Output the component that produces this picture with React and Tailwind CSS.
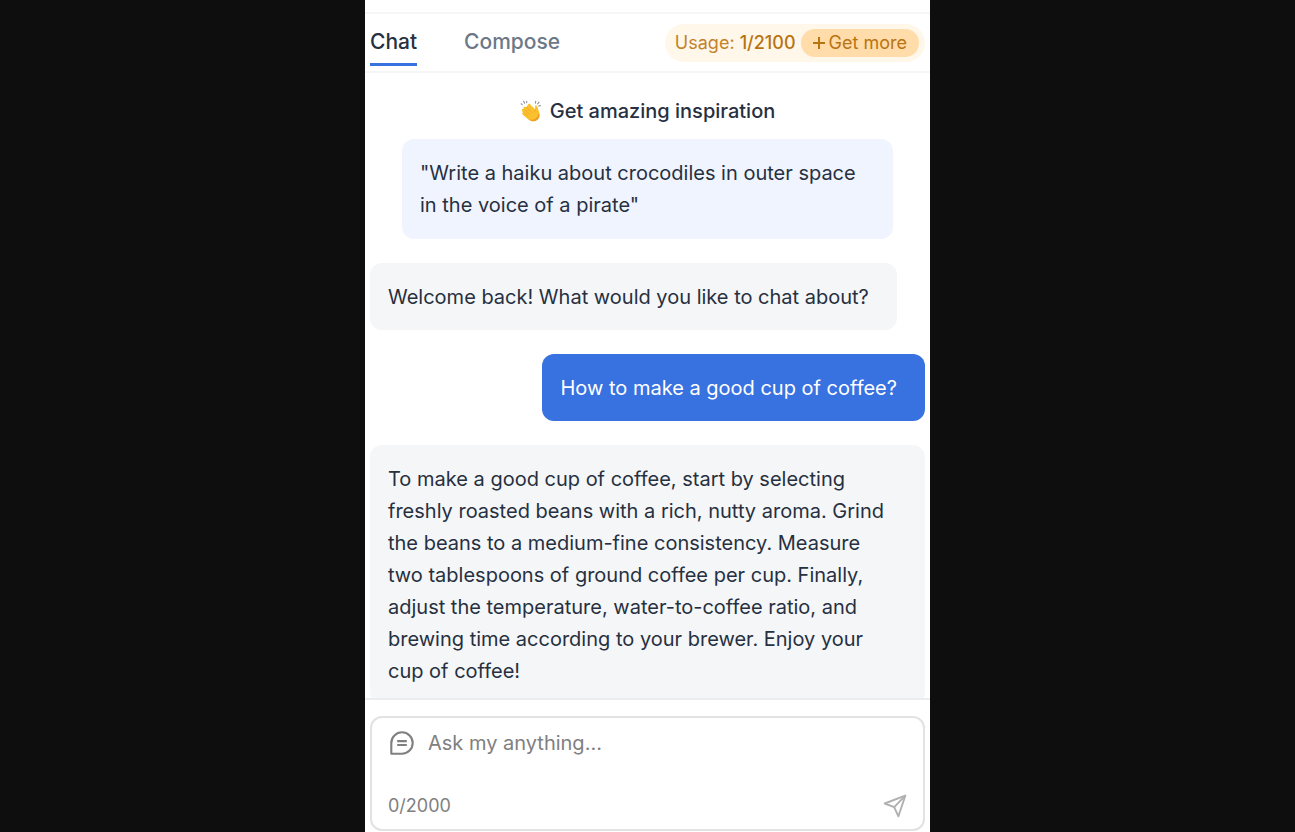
import React, { useState } from "react";

function ClapIcon() {
  return (
    <svg aria-hidden="true" viewBox="0 0 22 24" className="h-6 w-[22px] shrink-0">
      <g stroke="#8b9099" strokeWidth="1.1" strokeLinecap="round">
        <path d="M2.2 5.6 1.2 4.8M4.6 4.3 3.6 2.2M6.6 3.8 6.8 2.2M15.4 4.2l.3-1.8M17.6 4.8l1.4-1.600M18.6 7l1.8-.4" />
      </g>
      <path
        d="M8.2 5.2c1-.8 2 0 2.6.8l4.5 4.4-.3-2.6c-.1-1.500 1.800-1.700 2.200-.4l1.400 4.100c1.800 4.200 1.400 7.100-.9 9.100-2.800 2.400-6.500 2-9.300-.2l-5.900-5c-1-1-.2-2.200.9-1.900-1.600-1.200-2.100-2-1.400-2.900.5-.7 1.300-.6 2-.2-.9-1-.8-2.100 0-2.500.8-.5 1.500-.2 2.200.4.2-.5 1-1.300 2-3.100Z"
        fill="#fbc02d"
      />
      <path
        d="m4.200 10.600 5.200 4.700M6.300 8.300l5.100 4.800M3.600 13.600l4.400 3.700M15.300 10.400c.2 1.400-.2 2.300-1.100 3"
        fill="none"
        stroke="#eda82a"
        strokeWidth=".8"
        strokeLinecap="round"
      />
      <path d="M18.900 13.500c.9 3.500.2 6-1.900 7.500-2.700 2-6 1.300-8.400-.7 4.300 1.300 9.300-.2 10.300-6.800Z" fill="#ed9f25" />
    </svg>
  );
}

function ChatIcon() {
  return (
    <svg aria-hidden="true" viewBox="0 0 24 24" className="h-6 w-6 shrink-0" fill="none" stroke="#808080" strokeWidth="2.1">
      <path d="M1.300 22.700V12A10.700 10.700 0 1 1 12 22.700Z" strokeLinejoin="round" />
      <path d="M7.200 10.100h9.600M7.200 14h9.600" />
    </svg>
  );
}

function SendIcon() {
  return (
    <svg aria-hidden="true" viewBox="0 0 24 24" className="h-6 w-6" fill="none" stroke="#b0b0b0" strokeWidth="1.900" strokeLinejoin="round" strokeLinecap="round">
      <path d="M22.300 1.700 1.700 9.500l9.500 3.700 4.200 9.100Z" />
      <path d="M22.300 1.700 11.200 13.200" />
    </svg>
  );
}

function Bubble({ own, children }) {
  return (
    <p
      className={
        own
          ? "self-end rounded-xl bg-[#3871e0] pt-[18px] pr-7 pb-[17px] pl-[18px] text-white"
          : "self-start rounded-xl bg-[#f4f6f8] pt-[18px] pr-7 pb-[17px] pl-[18px]"
      }
    >
      {children}
    </p>
  );
}

export default function App() {
  const [text, setText] = useState("");
  return (
    <div className="flex h-screen justify-center bg-[#0e0e0e] font-['Inter',sans-serif] text-[#27303f]">
      <main className="flex w-full max-w-[565px] flex-col bg-white">
        <header className="mt-3 flex h-[61px] shrink-0 items-center justify-between border-y-2 border-[#f6f6f7] px-[5px]">
          <nav className="flex gap-[47px] self-stretch text-[21px] font-medium">
            <button className="mb-[5px] border-b-3 border-[#3871e0] pt-[6px]">Chat</button>
            <button className="mb-[5px] border-b-3 border-transparent pt-[6px] text-[#6c7888]">Compose</button>
          </nav>
          <div className="flex h-[38px] items-center gap-[5px] rounded-full bg-[#fff7e9] pr-[6px] pl-[10px] text-lg text-[#c38329]">
            <span>
              Usage: <strong className="font-medium text-[#b97412]">1/2100</strong>
            </span>
            <button className="flex h-7 items-center gap-1 rounded-full bg-[#ffdca9] px-3 text-[#b97412]">
              <svg aria-hidden="true" viewBox="0 0 12 12" className="h-3 w-3" stroke="currentColor" strokeWidth="2">
                <path d="M6 0v12M0 6h12" />
              </svg>
              Get more
            </button>
          </div>
        </header>

        <section className="flex min-h-0 flex-1 flex-col gap-6 overflow-hidden px-[5px] pt-[22px] text-xl/8 *:shrink-0">
          <div className="flex flex-col gap-3">
            <h2 className="flex items-center justify-center gap-2 font-medium">
              <ClapIcon />
              Get amazing inspiration
            </h2>
            <p className="mx-8 rounded-xl bg-[#eff4ff] px-[18px] py-[18px]">
              "Write a haiku about crocodiles in outer space in the voice of a pirate"
            </p>
          </div>
          <Bubble>Welcome back! What would you like to chat about?</Bubble>
          <Bubble own>How to make a good cup of coffee?</Bubble>
          <Bubble>
            To make a good cup of coffee, start by selecting freshly roasted beans with a rich, nutty aroma. Grind the
            beans to a medium-fine consistency. Measure two tablespoons of ground coffee per cup. Finally, adjust the
            temperature, water-to-coffee ratio, and brewing time according to your brewer. Enjoy your cup of coffee!
          </Bubble>
        </section>

        <form className="shrink-0 border-t-2 border-[#ebedef] bg-white px-[5px] pt-4 pb-px" onSubmit={(e) => e.preventDefault()}>
          <div className="flex h-[115px] flex-col justify-between rounded-xl border-2 border-[#e2e2e2] px-4 pt-[9px] pb-[9px]">
            <label className="flex items-center gap-[14px] pl-0.5">
              <ChatIcon />
              <input
                aria-label="Message"
                value={text}
                onChange={(e) => setText(e.target.value)}
                maxLength={2000}
                placeholder="Ask my anything..."
                className="h-8 min-w-0 flex-1 text-xl outline-none placeholder:text-[#808080]"
              />
            </label>
            <div className="flex items-center justify-between text-lg text-[#808080]">
              <span>{text.length}/2000</span>
              <button aria-label="Send" type="submit">
                <SendIcon />
              </button>
            </div>
          </div>
        </form>
      </main>
    </div>
  );
}
